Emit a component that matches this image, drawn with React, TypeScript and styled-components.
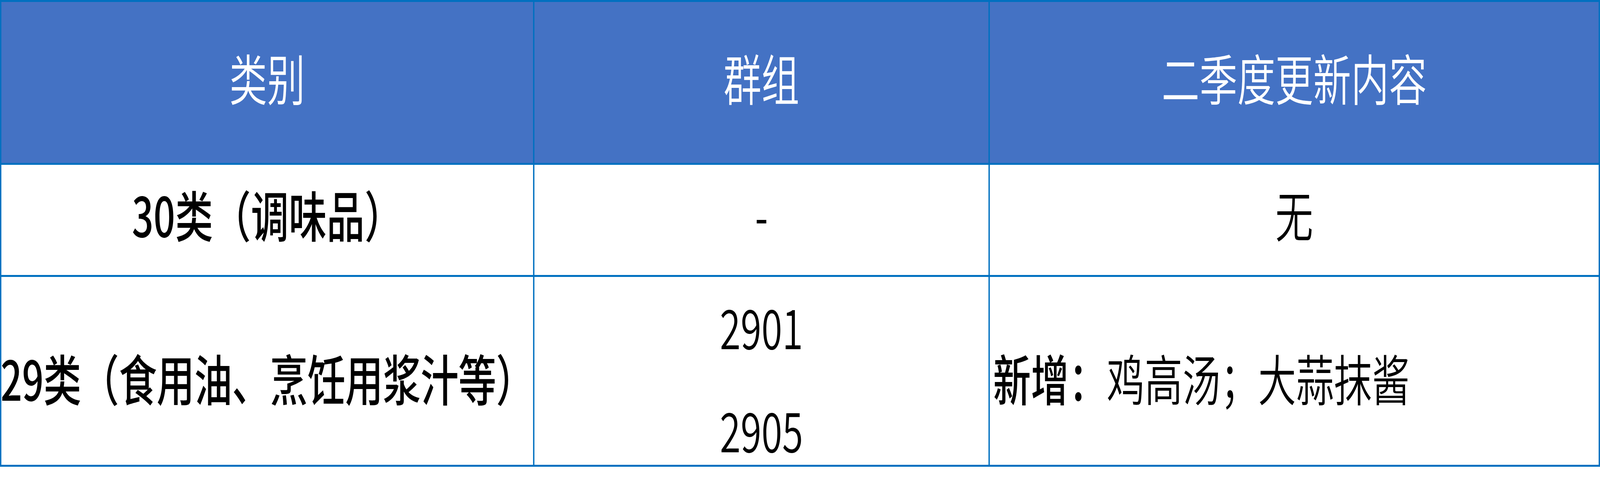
import { useEffect, useState } from "react";
import styled, { createGlobalStyle } from "styled-components";

const GlobalStyle = createGlobalStyle`
  html, body {
    margin: 0;
    padding: 0;
    background: #ffffff;
    overflow: hidden;
  }
  body {
    font-family: "Noto Sans CJK SC", "Noto Sans", sans-serif;
  }
`;

const LINE = "#0070c0";
const DESIGN_WIDTH = 5913;

const Viewport = styled.div`
  width: 100vw;
  height: 100vh;
  overflow: hidden;
`;

const Sheet = styled.div`
  display: grid;
  grid-template-columns: 1965px 1678px 2250px;
  grid-template-rows: 412px 282px 481px;
  gap: 5px;
  padding: 5px;
  width: ${DESIGN_WIDTH}px;
  box-sizing: border-box;
  background: ${LINE};
  transform-origin: 0 0;
`;

const Cell = styled.div<{ $head?: boolean; $shift: number; $align?: "center" | "left" }>`
  display: flex;
  flex-direction: column;
  justify-content: center;
  align-items: ${({ $align }) => ($align === "left" ? "flex-start" : "center")};
  box-sizing: border-box;
  padding: ${({ $shift }) => ($shift < 0 ? `0 0 ${-2 * $shift}px` : `${2 * $shift}px 0 0`)};
  padding-left: ${({ $align }) => ($align === "left" ? "12px" : "0")};
  background: ${({ $head }) => ($head ? "#4472c4" : "#ffffff")};
  color: ${({ $head }) => ($head ? "#ffffff" : "#000000")};
  font-size: 140px;
  line-height: 132px;
  white-space: nowrap;
  min-width: 0;
`;

const Line = styled.span<{ $bold?: boolean; $tight?: boolean }>`
  display: block;
  font-weight: ${({ $bold }) => ($bold ? 500 : 350)};
  letter-spacing: ${({ $tight }) => ($tight ? "-0.6px" : "normal")};
`;

const Stack = styled.div`
  display: flex;
  flex-direction: column;
  align-items: center;
  gap: 132px;
`;

const Strong = styled.b`
  font-weight: 500;
`;

const heads = ["类别", "群组", "二季度更新内容"];

export default function App() {
  // the sheet is drawn at its full width and squeezed to whatever the window gives
  const [scale, setScale] = useState(() => window.innerWidth / DESIGN_WIDTH);

  useEffect(() => {
    const onResize = () => setScale(window.innerWidth / DESIGN_WIDTH);
    window.addEventListener("resize", onResize);
    return () => window.removeEventListener("resize", onResize);
  }, []);

  return (
    <>
      <GlobalStyle />
      <Viewport>
        <Sheet style={{ transform: `scaleX(${scale})` }}>
          {heads.map((h) => (
            <Cell key={h} $head $shift={-15}>
              <Line>{h}</Line>
            </Cell>
          ))}

          <Cell $shift={-17}>
            <Line $bold>30类（调味品）</Line>
          </Cell>
          <Cell $shift={-17}>
            <Line>-</Line>
          </Cell>
          <Cell $shift={-17}>
            <Line>无</Line>
          </Cell>

          <Cell $shift={15}>
            <Line $bold $tight>29类（食用油、烹饪用浆汁等）</Line>
          </Cell>
          <Cell $shift={15}>
            <Stack>
              <Line>2901</Line>
              <Line>2905</Line>
            </Stack>
          </Cell>
          <Cell $shift={15} $align="left">
            <Line>
              <Strong>新增：</Strong>鸡高汤；大蒜抹酱
            </Line>
          </Cell>
        </Sheet>
      </Viewport>
    </>
  );
}
